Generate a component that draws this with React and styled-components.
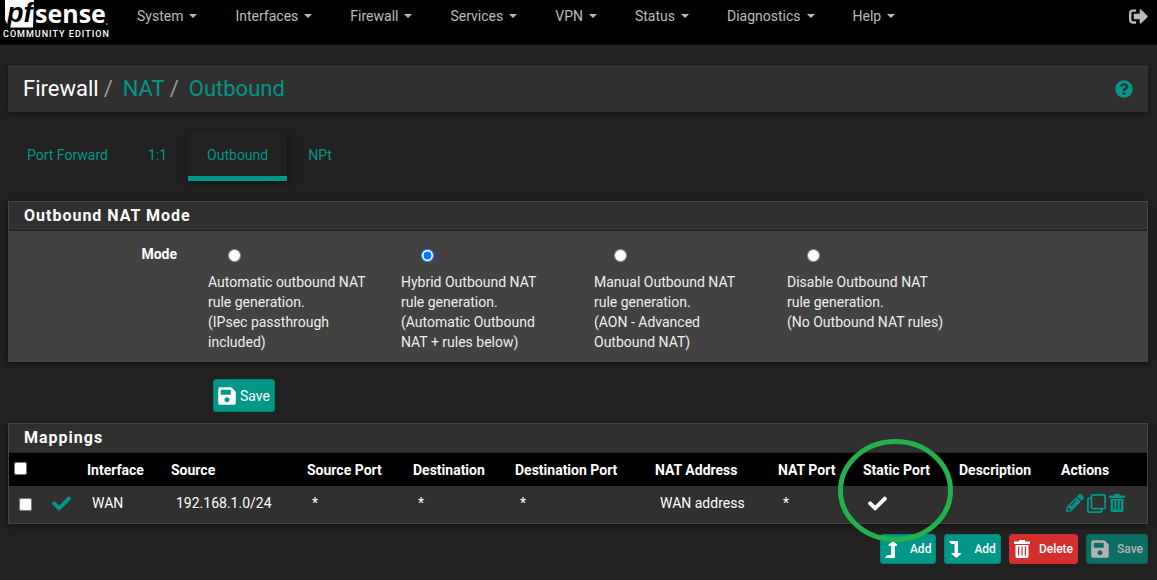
import React from "react"
import styled, { createGlobalStyle } from "styled-components"
import {
  FaCheck,
  FaPencilAlt,
  FaQuestionCircle,
  FaRegClone,
  FaSave,
  FaSignOutAlt,
} from "react-icons/fa"

const teal = "#009688"

const GlobalStyle = createGlobalStyle`
  * {
    box-sizing: border-box;
  }
  body {
    margin: 0;
    background: #212121;
    color: #fff;
    font-family: Roboto, "Liberation Sans", sans-serif;
    font-size: 14px;
    line-height: 20px;
  }
`

const Navbar = styled.nav`
  display: flex;
  align-items: flex-start;
  height: 45px;
  background: #000;
  border-bottom: 1px solid #0c0c0c;
`
const Brand = styled.a`
  display: block;
  width: 118px;
  height: 44px;
  svg {
    display: block;
  }
`
const NavList = styled.ul`
  display: flex;
  flex: 1;
  margin: 0;
  padding: 0;
  list-style: none;
`
const NavLink = styled.a`
  display: flex;
  align-items: center;
  gap: 6px;
  padding: 6px 19px;
  color: #bbb;
  text-decoration: none;
`
const Caret = styled.span`
  border-top: 4px solid #bbb;
  border-left: 4px solid transparent;
  border-right: 4px solid transparent;
`
const Logout = styled.a`
  display: flex;
  padding: 7px 9px 0 0;
  color: #bbb;
`

const Page = styled.main`
  padding: 20px 9px 16px 8px;
`
const Header = styled.header`
  display: flex;
  align-items: center;
  justify-content: space-between;
  height: 47px;
  padding: 0 15px;
  background: #303030;
  box-shadow: 0 1px 4px rgba(0, 0, 0, 0.4);
`
const Crumbs = styled.ol`
  display: flex;
  margin: 0;
  padding: 0;
  list-style: none;
  font-size: 22px;
  line-height: 24px;
`
const Crumb = styled.li`
  & + &::before {
    content: "/";
    padding: 0 10px 0 5px;
    color: #999;
  }
  a {
    color: ${teal};
    text-decoration: none;
  }
`
const HelpLink = styled.a`
  display: flex;
  color: ${teal};
`

const Tabs = styled.ul`
  display: flex;
  gap: 2px;
  margin: 20px 0;
  padding: 0;
  list-style: none;
`
const Tab = styled.a`
  display: block;
  height: 49px;
  padding: 13px 19px 0;
  border-bottom: 5px solid ${p => (p.$active ? teal : "transparent")};
  box-shadow: ${p => (p.$active ? "2px 2px 8px rgba(0, 0, 0, 0.4)" : "none")};
  color: ${teal};
  text-decoration: none;
`

const Panel = styled.section`
  border: 1px solid #444;
  background: ${p => p.$background};
  box-shadow: 0 2px 6px rgba(0, 0, 0, 0.5);
`
const PanelTitle = styled.h2`
  margin: 0;
  padding: 4px 15px;
  height: 29px;
  background: #303030;
  border-bottom: 1px solid #212121;
  font-size: 16px;
  font-weight: 700;
  letter-spacing: 1px;
`
const ModeGroup = styled.div`
  display: grid;
  grid-template-columns: repeat(6, 1fr);
  margin: 0 -10px;
  padding: 13px 0 9px;
`
const ModeLabel = styled.strong`
  padding-right: 15px;
  text-align: right;
`
const ModeOption = styled.label`
  display: block;
  padding: 0 18px 0 16px;
  color: #eee;
`
const Radio = styled.input`
  display: block;
  width: 13px;
  height: 13px;
  margin: 5px 0 10px 20px;
`
const Line = styled.span`
  display: block;
`

const FormActions = styled.div`
  padding: 17px 0 11px 205px;
`
const Button = styled.button`
  display: inline-flex;
  align-items: center;
  gap: ${p => p.$gap || 4}px;
  height: ${p => (p.$small ? 30 : 33)}px;
  padding: 0 4px;
  border: 1px solid ${p => (p.$danger ? "#d32f2f" : "#008578")};
  border-radius: 3px;
  background: ${p => (p.$danger ? "#d32f2f" : teal)};
  color: #fff;
  font-family: inherit;
  font-size: ${p => (p.$small ? 12 : 14)}px;
  font-weight: ${p => (p.$small ? 500 : 400)};
  &:disabled {
    opacity: 0.65;
  }
`
const SaveIcon = styled(FaSave)`
  width: 18px;
  height: 20px;
`

const Table = styled.table`
  width: 100%;
  table-layout: fixed;
  border-collapse: collapse;
`
const Th = styled.th`
  position: relative;
  height: 33px;
  padding: 0 5px;
  background: #000;
  text-align: left;
  font-weight: 700;
  white-space: nowrap;
`
const Td = styled.td`
  height: 37px;
  padding: 0 0 3px 10px;
  white-space: nowrap;
  svg {
    display: block;
  }
`
const Checkbox = styled.input`
  display: block;
  width: 13px;
  height: 13px;
  margin: ${p => p.$margin};
`
const RowActions = styled.div`
  display: flex;
  align-items: center;
  gap: 3px;
  a {
    color: ${teal};
  }
`
const Highlight = styled.svg`
  position: absolute;
  top: -14px;
  left: -20px;
  z-index: 2;
  pointer-events: none;
`
const TableActions = styled.div`
  display: flex;
  justify-content: flex-end;
  gap: 8px;
  padding-top: 10px;
`

const Logo = () => (
  <svg width="118" height="44" viewBox="0 0 118 44">
    <path d="M5 0H34L33 27.500H9L5 20Z" fill="#fff" />
    <text
      x="7"
      y="22"
      fontFamily="Liberation Sans, sans-serif"
      fontSize="27"
      fontWeight="700"
      fontStyle="italic"
      fill="#000"
    >
      pf
    </text>
    <text
      x="35"
      y="23"
      fontFamily="Open Sans, sans-serif"
      fontSize="25"
      fontWeight="700"
      fill="#fff"
    >
      sense
    </text>
    <circle cx="107" cy="24" r="1" fill="#777" />
    <text
      x="3"
      y="37"
      fontFamily="Roboto, sans-serif"
      fontSize="9"
      fontWeight="500"
      letterSpacing="1"
      fill="#fff"
    >
      COMMUNITY EDITION
    </text>
  </svg>
)

const TrashIcon = () => (
  <svg width="16" height="18" viewBox="0 0 16 18" fill="currentColor">
    <path d="M5 0H11V1.500H16V4H0V1.500H5Z" />
    <path
      fillRule="evenodd"
      d="M1.500 5H14.500V16.500Q14.500 18 13 18H3Q1.500 18 1.500 16.500ZM4 6.500V15.500H5.200V6.500ZM7.400 6.500V15.500H8.600V6.500ZM10.800 6.500V15.500H12V6.500Z"
    />
  </svg>
)

const AddTopIcon = () => (
  <svg width="12" height="17" viewBox="0 0 12 17" fill="currentColor">
    <path d="M8 0L12 3.500V5H10V17H0L2 14H6V5H3.500V3.500Z" />
  </svg>
)

const AddBottomIcon = () => (
  <svg width="12" height="17" viewBox="0 0 12 17" fill="currentColor">
    <path d="M0 0H9V12H12V13L7.500 17L2.500 13V12H5.500V3H2Z" />
  </svg>
)

const menus = [
  "System",
  "Interfaces",
  "Firewall",
  "Services",
  "VPN",
  "Status",
  "Diagnostics",
  "Help",
]

const tabs = ["Port Forward", "1:1", "Outbound", "NPt"]

const modes = [
  {
    id: "automatic",
    lines: [
      "Automatic outbound NAT rule generation.",
      "(IPsec passthrough included)",
    ],
  },
  {
    id: "hybrid",
    lines: [
      "Hybrid Outbound NAT rule generation.",
      "(Automatic Outbound NAT + rules below)",
    ],
  },
  {
    id: "advanced",
    lines: [
      "Manual Outbound NAT rule generation.",
      "(AON - Advanced Outbound NAT)",
    ],
  },
  {
    id: "disabled",
    lines: ["Disable Outbound NAT rule generation.", "(No Outbound NAT rules)"],
  },
]

const columns = [33, 40, 84, 136, 106, 102, 140, 123, 85, 96, 102, 91]

export default () => (
  <>
    <GlobalStyle />
    <Navbar>
      <Brand href="#" aria-label="pfSense home">
        <Logo />
      </Brand>
      <NavList>
        {menus.map(menu => (
          <li key={menu}>
            <NavLink href="#">
              {menu}
              <Caret />
            </NavLink>
          </li>
        ))}
      </NavList>
      <Logout href="#" aria-label="Log out">
        <FaSignOutAlt size={19} />
      </Logout>
    </Navbar>
    <Page>
      <Header>
        <Crumbs>
          <Crumb>Firewall</Crumb>
          <Crumb>
            <a href="#">NAT</a>
          </Crumb>
          <Crumb>
            <a href="#">Outbound</a>
          </Crumb>
        </Crumbs>
        <HelpLink href="#" aria-label="Help">
          <FaQuestionCircle size={18} />
        </HelpLink>
      </Header>
      <Tabs>
        {tabs.map(tab => (
          <li key={tab}>
            <Tab href="#" $active={tab === "Outbound"}>
              {tab}
            </Tab>
          </li>
        ))}
      </Tabs>
      <form onSubmit={e => e.preventDefault()}>
        <Panel $background="#424242">
          <PanelTitle>Outbound NAT Mode</PanelTitle>
          <ModeGroup role="radiogroup" aria-labelledby="mode-label">
            <ModeLabel id="mode-label">Mode</ModeLabel>
            {modes.map(mode => (
              <ModeOption key={mode.id}>
                <Radio
                  type="radio"
                  name="mode"
                  value={mode.id}
                  defaultChecked={mode.id === "hybrid"}
                />
                {mode.lines.map(line => (
                  <Line key={line}>{line}</Line>
                ))}
              </ModeOption>
            ))}
          </ModeGroup>
        </Panel>
        <FormActions>
          <Button type="submit">
            <SaveIcon />
            Save
          </Button>
        </FormActions>
      </form>
      <Panel $background="#303030">
        <PanelTitle>Mappings</PanelTitle>
        <Table>
          <colgroup>
            {columns.map((width, i) => (
              <col key={i} width={width} />
            ))}
          </colgroup>
          <thead>
            <tr>
              <Th>
                <Checkbox
                  type="checkbox"
                  aria-label="Select all"
                  $margin="0 0 3px"
                />
              </Th>
              <Th />
              <Th>Interface</Th>
              <Th>Source</Th>
              <Th>Source Port</Th>
              <Th>Destination</Th>
              <Th>Destination Port</Th>
              <Th>NAT Address</Th>
              <Th>NAT Port</Th>
              <Th>
                Static Port
                <Highlight width="115" height="103" viewBox="0 0 115 103">
                  <ellipse
                    cx="57.5"
                    cy="51.5"
                    rx="55"
                    ry="49"
                    fill="none"
                    stroke="#22b14c"
                    strokeWidth="5"
                  />
                </Highlight>
              </Th>
              <Th>Description</Th>
              <Th>Actions</Th>
            </tr>
          </thead>
          <tbody>
            <tr>
              <Td>
                <Checkbox
                  type="checkbox"
                  aria-label="Select rule"
                  $margin="3px 0 0"
                />
              </Td>
              <Td>
                <FaCheck size={19} color={teal} />
              </Td>
              <Td>WAN</Td>
              <Td>192.168.1.0/24</Td>
              <Td>*</Td>
              <Td>*</Td>
              <Td>*</Td>
              <Td>WAN address</Td>
              <Td>*</Td>
              <Td>
                <FaCheck size={19} />
              </Td>
              <Td />
              <Td>
                <RowActions>
                  <a href="#" aria-label="Edit">
                    <FaPencilAlt size={18} />
                  </a>
                  <a href="#" aria-label="Copy">
                    <FaRegClone size={19} />
                  </a>
                  <a href="#" aria-label="Delete">
                    <TrashIcon />
                  </a>
                </RowActions>
              </Td>
            </tr>
          </tbody>
        </Table>
      </Panel>
      <TableActions>
        <Button $small $gap={13}>
          <AddTopIcon />
          Add
        </Button>
        <Button $small $gap={13}>
          <AddBottomIcon />
          Add
        </Button>
        <Button $small $danger $gap={9}>
          <TrashIcon />
          Delete
        </Button>
        <Button $small $gap={8} disabled>
          <SaveIcon />
          Save
        </Button>
      </TableActions>
    </Page>
  </>
)
